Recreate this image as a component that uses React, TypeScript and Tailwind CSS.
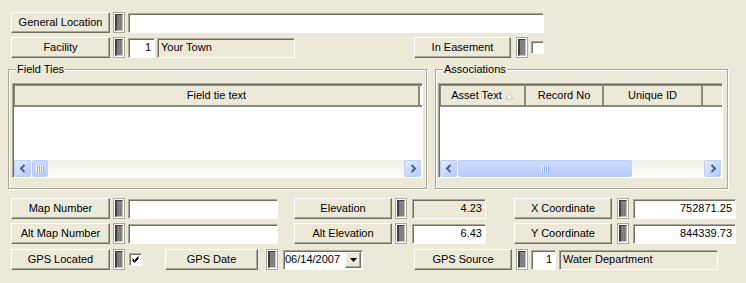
import React from "react";

const sunken =
  "border border-t-[#ACA899] border-l-[#ACA899] border-r-white border-b-white shadow-[inset_1px_1px_0_#716F64]";

function Btn({ className = "", children }: { className?: string; children: React.ReactNode }) {
  return (
    <div
      className={`h-[21px] shrink-0 flex items-center justify-center bg-[#ECE9D8] border border-t-white border-l-white border-r-[#716F64] border-b-[#716F64] shadow-[inset_-1px_-1px_0_#ACA899] whitespace-nowrap ${className}`}
    >
      {children}
    </div>
  );
}

function Marker({ className = "" }: { className?: string }) {
  return (
    <div className={`w-[12px] h-[21px] shrink-0 bg-[#ACA899] p-[1px] ${className}`}>
      <div className="w-full h-full bg-white p-[1px]">
        <div className="w-full h-full bg-[#808080] border-l-2 border-t border-[#3F3F3F] border-r border-r-[#C8C5B8] border-b border-b-[#C8C5B8]" />
      </div>
    </div>
  );
}

function Field({
  className = "",
  children,
  readOnly = false,
  right = false,
}: {
  className?: string;
  children?: React.ReactNode;
  readOnly?: boolean;
  right?: boolean;
}) {
  return (
    <div
      className={`h-[20px] shrink-0 flex items-center px-[3px] whitespace-nowrap ${sunken} ${
        readOnly ? "bg-[#ECE9D8]" : "bg-white"
      } ${right ? "justify-end" : "justify-start"} ${className}`}
    >
      {children}
    </div>
  );
}

function CheckBox({ checked = false, className = "" }: { checked?: boolean; className?: string }) {
  return (
    <div className={`w-[13px] h-[13px] shrink-0 bg-white flex items-center justify-center ${sunken} ${className}`}>
      {checked && (
        <svg width="9" height="9" viewBox="0 0 9 9">
          <path d="M1.5 3.5 L3.5 5.5 L7.5 1.5 M1.5 4.5 L3.5 6.5 L7.5 2.5 M1.5 5.5 L3.5 7.5 L7.5 3.5" stroke="#000" strokeWidth="1" fill="none" />
        </svg>
      )}
    </div>
  );
}

function SBtn({ dir }: { dir: "left" | "right" }) {
  return (
    <div className="w-[17px] h-[17px] shrink-0 rounded-[2px] border border-[#BCCFF8] bg-linear-to-br from-[#E4ECFE] to-[#B4C8F7] flex items-center justify-center">
      <svg width="8" height="9" viewBox="0 0 8 9">
        <path
          d={dir === "left" ? "M5.5 1 L2 4.5 L5.5 8" : "M2.5 1 L6 4.5 L2.5 8"}
          stroke="#4D6185"
          strokeWidth="2"
          fill="none"
        />
      </svg>
    </div>
  );
}

function Grip() {
  return (
    <svg width="8" height="8" viewBox="0 0 8 8">
      <path d="M0.5 0 V8 M2.5 0 V8 M4.5 0 V8 M6.5 0 V8" stroke="#EEF4FE" strokeWidth="1" />
      <path d="M1.5 1 V8 M3.5 1 V8 M5.5 1 V8 M7.5 1 V8" stroke="#8CB0F8" strokeWidth="1" />
    </svg>
  );
}

function Thumb({ className = "" }: { className?: string }) {
  return (
    <div
      className={`h-[17px] shrink-0 rounded-[2px] border border-[#BCCFF8] bg-linear-to-b from-[#CCDBFD] to-[#BACDF9] flex items-center justify-center ${className}`}
    >
      <Grip />
    </div>
  );
}

function HeadCell({ className = "", children }: { className?: string; children?: React.ReactNode }) {
  return (
    <div
      className={`h-full shrink-0 flex items-center justify-center bg-[#ECE9D8] border-r-2 border-[#8C8A7E] whitespace-nowrap ${className}`}
    >
      {children}
    </div>
  );
}

function Group({ label, className = "", children }: { label: string; className?: string; children: React.ReactNode }) {
  return (
    <div
      className={`relative h-[120px] shrink-0 border border-[#ACA899] shadow-[inset_1px_1px_0_white,1px_1px_0_white] ${className}`}
    >
      <div className="absolute top-[-8px] left-[7px] px-[1px] bg-[#ECE9D8] leading-[14px]">{label}</div>
      {children}
    </div>
  );
}

export default function App() {
  return (
    <div className="w-[746px] h-[283px] bg-[#ECE9D8] text-[11px] leading-[13px] text-black overflow-hidden flex flex-col [font-family:'Liberation_Sans',Arial,sans-serif]">
      {/* Row A */}
      <div className="mt-[12px] pl-[11px] flex items-center h-[21px]">
        <Btn className="w-[99px]">General Location</Btn>
        <Marker className="ml-[3px]" />
        <Field className="ml-[3px] w-[416px]" />
      </div>
      {/* Row B */}
      <div className="mt-[4px] pl-[11px] flex items-center h-[21px]">
        <Btn className="w-[99px]">Facility</Btn>
        <Marker className="ml-[3px]" />
        <Field className="ml-[3px] w-[27px]" right>
          1
        </Field>
        <Field className="ml-[2px] w-[138px]" readOnly>
          Your Town
        </Field>
        <Btn className="ml-[119px] w-[97px]">In Easement</Btn>
        <Marker className="ml-[5px]" />
        <CheckBox className="ml-[3px]" />
      </div>

      {/* Groups */}
      <div className="mt-[11px] pl-[8px] flex">
        <Group label="Field Ties" className="w-[419px] pt-[13px] pl-[3px]">
          <div className={`w-[411px] h-[95px] flex flex-col bg-white ${sunken}`}>
            <div className="h-[19px] ml-[1px] mt-[1px] flex border-t border-l border-[#8C8A7E] border-b-2 border-b-[#8C8A7E] box-content">
              <HeadCell className="w-[405px]">Field tie text</HeadCell>
            </div>
            <div className="flex-1" />
            <div className="h-[17px] ml-[1px] mr-[1px] flex bg-linear-to-b from-[#EFEEE7] to-[#FEFEFB]">
              <SBtn dir="left" />
              <Thumb className="w-[16px] ml-[1px]" />
              <div className="flex-1" />
              <SBtn dir="right" />
            </div>
          </div>
        </Group>
        <Group label="Associations" className="ml-[8px] w-[293px] pt-[13px] pl-[2px]">
          <div className={`w-[285px] h-[95px] flex flex-col bg-white ${sunken}`}>
            <div className="h-[19px] ml-[1px] mt-[1px] flex border-t border-l border-[#8C8A7E] border-b-2 border-b-[#8C8A7E] box-content overflow-hidden">
              <HeadCell className="w-[85px]">
                <span>Asset Text</span>
                <svg width="9" height="8" viewBox="0 0 9 8" className="ml-[3px]">
                  <path d="M4.5 1 L8 7 L1 7 Z" fill="#FFFFFF" stroke="#C7C4B8" strokeWidth="1" />
                </svg>
              </HeadCell>
              <HeadCell className="w-[78px]">Record No</HeadCell>
              <HeadCell className="w-[99px]">Unique ID</HeadCell>
              <HeadCell className="w-[30px] border-r-0" />
            </div>
            <div className="flex-1" />
            <div className="h-[17px] ml-[1px] mr-[1px] flex bg-linear-to-b from-[#EFEEE7] to-[#FEFEFB]">
              <SBtn dir="left" />
              <Thumb className="w-[174px] ml-[1px]" />
              <div className="flex-1" />
              <SBtn dir="right" />
            </div>
          </div>
        </Group>
      </div>

      {/* Bottom row 1 */}
      <div className="mt-[9px] pl-[11px] flex items-center h-[21px]">
        <Btn className="w-[99px]">Map Number</Btn>
        <Marker className="ml-[3px]" />
        <Field className="ml-[3px] w-[150px]" />
        <Btn className="ml-[16px] w-[98px]">Elevation</Btn>
        <Marker className="ml-[3px]" />
        <Field className="ml-[5px] w-[74px]" readOnly right>
          4.23
        </Field>
        <Btn className="ml-[28px] w-[98px]">X Coordinate</Btn>
        <Marker className="ml-[5px]" />
        <Field className="ml-[4px] w-[103px]" right>
          752871.25
        </Field>
      </div>
      {/* Bottom row 2 */}
      <div className="mt-[4px] pl-[11px] flex items-center h-[21px]">
        <Btn className="w-[99px]">Alt Map Number</Btn>
        <Marker className="ml-[3px]" />
        <Field className="ml-[3px] w-[150px]" />
        <Btn className="ml-[16px] w-[98px]">Alt Elevation</Btn>
        <Marker className="ml-[3px]" />
        <Field className="ml-[5px] w-[74px]" right>
          6.43
        </Field>
        <Btn className="ml-[28px] w-[98px]">Y Coordinate</Btn>
        <Marker className="ml-[5px]" />
        <Field className="ml-[4px] w-[103px]" right>
          844339.73
        </Field>
      </div>
      {/* Bottom row 3 */}
      <div className="mt-[5px] pl-[11px] flex items-center h-[21px]">
        <Btn className="w-[99px]">GPS Located</Btn>
        <Marker className="ml-[3px]" />
        <CheckBox checked className="ml-[4px]" />
        <Btn className="ml-[23px] w-[93px]">GPS Date</Btn>
        <Marker className="ml-[8px]" />
        <div className={`ml-[5px] w-[80px] h-[20px] shrink-0 bg-white flex items-center ${sunken}`}>
          <span className="pl-[1px] flex-1">06/14/2007</span>
          <div className="w-[16px] h-[16px] mr-[1px] flex items-center justify-center bg-[#ECE9D8] border border-t-white border-l-white border-r-[#716F64] border-b-[#716F64] shadow-[inset_-1px_-1px_0_#ACA899]">
            <svg width="7" height="4" viewBox="0 0 7 4">
              <path d="M0 0 H7 L3.5 4 Z" fill="#000" />
            </svg>
          </div>
        </div>
        <Btn className="ml-[51px] w-[98px]">GPS Source</Btn>
        <Marker className="ml-[4px]" />
        <Field className="ml-[3px] w-[25px]" right>
          1
        </Field>
        <Field className="ml-[3px] w-[159px]" readOnly>
          Water Department
        </Field>
      </div>
    </div>
  );
}
